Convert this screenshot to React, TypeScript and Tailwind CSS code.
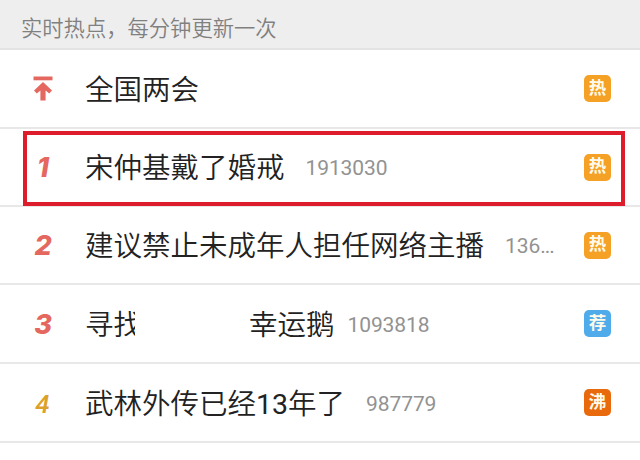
import React from "react";

type Tag = "热" | "荐" | "沸";

type Topic = {
  rank: number | "top";
  title: React.ReactNode;
  count?: React.ReactNode;
  gap?: string;
  tag: Tag;
  height: string;
  highlighted?: boolean;
};

const tagColors: Record<Tag, string> = {
  热: "bg-[#f4a125]",
  荐: "bg-[#4fabe9]",
  沸: "bg-[#e96a0c]",
};

const topics: Topic[] = [
  { rank: "top", title: "全国两会", tag: "热", height: "h-[79px]" },
  { rank: 1, title: "宋仲基戴了婚戒", count: "1913030", gap: "ml-[21px]", tag: "热", height: "h-[78px]", highlighted: true },
  {
    rank: 2,
    title: "建议禁止未成年人担任网络主播",
    count: (
      <>
        136<span className="tracking-[-1px]">...</span>
      </>
    ),
    gap: "ml-[21px]",
    tag: "热",
    height: "h-[78px]",
  },
  {
    rank: 3,
    title: (
      <span className="flex">
        <span className="w-[50px] overflow-hidden">寻找</span>
        <span className="ml-[114px]">幸运鹅</span>
      </span>
    ),
    count: "1093818",
    gap: "ml-[13px]",
    tag: "荐",
    height: "h-[79px]",
  },
  {
    rank: 4,
    title: (
      <>
        武林外传已经<span className="font-normal">13</span>年了
      </>
    ),
    count: "987779",
    gap: "ml-[21px]",
    tag: "沸",
    height: "h-[79px]",
  },
];

function PinnedIcon() {
  return (
    <svg width="20" height="25" viewBox="0 0 20 25" fill="#e4685f">
      <rect x="0.5" y="0.5" width="19" height="3.8" />
      <path d="M10 6 L19 14.6 L16.2 17.6 L12.6 14.6 V24.5 H7.4 V14.6 L3.8 17.6 L1 14.6 Z" />
    </svg>
  );
}

function Rank({ rank }: { rank: Topic["rank"] }) {
  if (rank === "top") return <PinnedIcon />;
  return (
    <span
      className={
        rank < 4
          ? "pt-px pl-px font-['Inter',sans-serif] text-[27px] leading-none font-extrabold text-[#e4685f] italic"
          : "pt-[2px] font-['Roboto',sans-serif] text-[26px] leading-none font-medium text-[#dca128] italic"
      }
    >
      {rank}
    </span>
  );
}

function TopicRow({ topic }: { topic: Topic }) {
  return (
    <li className={`relative flex items-center border-b-2 border-[#e8e8e8] ${topic.height}`}>
      <div className="flex w-[85px] shrink-0 justify-center">
        <Rank rank={topic.rank} />
      </div>
      <div className="pt-[4px] text-[28.5px] leading-[40px] font-[350] whitespace-nowrap text-[#222]">
        {topic.title}
      </div>
      {topic.count && (
        <div
          className={`pt-[3px] font-['Roboto',sans-serif] text-[21px] leading-none tracking-[-0.1px] text-[#929292] ${topic.gap}`}
        >
          {topic.count}
        </div>
      )}
      <div
        className={`mr-[29px] ml-auto flex size-[27px] items-center justify-center rounded-[5px] text-[17.5px] leading-none font-bold text-[#fffbea] ${tagColors[topic.tag]}`}
      >
        {topic.tag}
      </div>
      {topic.highlighted && (
        <div className="absolute top-[2px] left-[23px] h-[75px] w-[602px] border-4 border-[#dd1c2c]" />
      )}
    </li>
  );
}

export default function App() {
  return (
    <main className="h-[460px] w-[640px] overflow-hidden bg-white font-['Roboto','Noto_Sans_CJK_SC',sans-serif]">
      <header className="flex h-[50px] items-center border-b-2 border-[#e3e3e3] bg-[#eeeeee] pt-[9px] pl-[21px] text-[21.3px] leading-none font-[350] text-[#808080]">
        实时热点，每分钟更新一次
      </header>
      <ul>
        {topics.map((topic) => (
          <TopicRow key={topic.rank} topic={topic} />
        ))}
      </ul>
    </main>
  );
}
